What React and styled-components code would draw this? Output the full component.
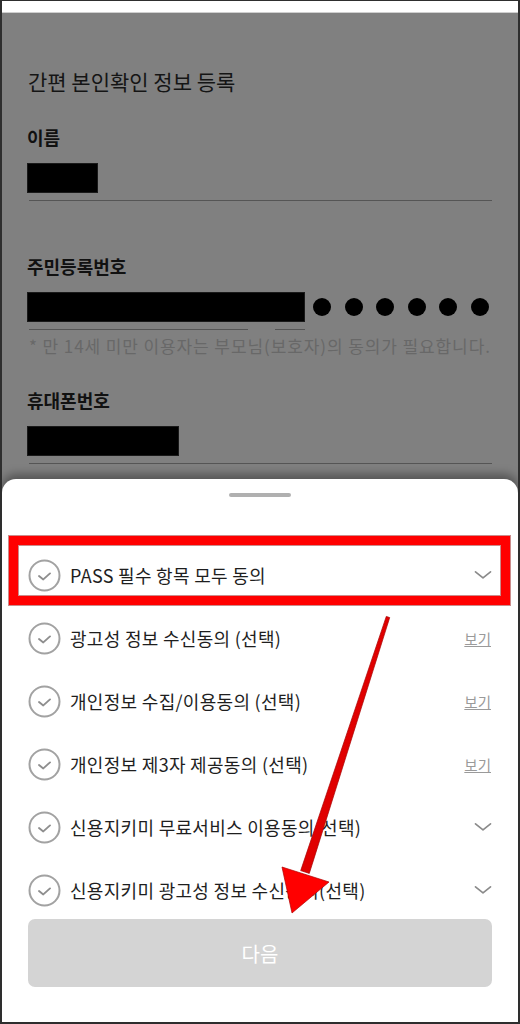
import React from "react";
import styled, { createGlobalStyle } from "styled-components";

const GlobalStyle = createGlobalStyle`
  html, body { margin: 0; padding: 0; background: #ffffff; }
  body { font-family: "Noto Sans CJK KR", "Noto Sans", sans-serif; }
  * { box-sizing: border-box; }
`;

const Frame = styled.div`
  position: relative;
  width: 520px;
  height: 1024px;
  border: 2px solid #2e2e2e;
  border-top-width: 1px;
  display: flex;
  flex-direction: column;
  overflow: hidden;
  background: #808080;
`;

const TopStrip = styled.div`
  height: 12px;
  flex: none;
  background: #ffffff;
  border-bottom: 1px solid #cfcfcf;
`;

const Form = styled.div`
  flex: 1;
  display: flex;
  flex-direction: column;
  padding: 53px 26px 0 25px;
  background: #808080;
`;

const Title = styled.h1`
  margin: 0 0 0 1px;
  font-size: 21px;
  line-height: 30px;
  font-weight: 400;
  color: #151515;
`;

const Field = styled.div`
  display: flex;
  flex-direction: column;
  margin-top: ${(p) => p.$gap}px;
`;

const Label = styled.div`
  font-size: 18px;
  line-height: 24px;
  font-weight: 700;
  color: #111;
`;

const ValueRow = styled.div`
  display: flex;
  align-items: center;
  margin-top: 14px;
  height: 30px;
`;

const Redacted = styled.div`
  width: ${(p) => p.$w}px;
  height: 30px;
  background: #000;
  border: 1px solid #1a1a1a;
`;

const Dots = styled.div`
  display: flex;
  gap: 13.5px;
  margin-left: 8px;
`;

const Dot = styled.span`
  width: 18px;
  height: 18px;
  border-radius: 50%;
  background: #000;
`;

const Underline = styled.div`
  margin: 7px 0 0 2px;
  height: 1px;
  background: #555;
`;

const SplitUnderline = styled.div`
  display: flex;
  gap: 27px;
  margin: 7px 0 0 2px;
`;

const Segment = styled.span`
  width: ${(p) => p.$w}px;
  height: 1px;
  background: #555;
`;

const Note = styled.p`
  margin: 5px 0 0 2px;
  font-size: 17px;
  line-height: 22px;
  color: #686868;
  white-space: nowrap;
  letter-spacing: 0.9px;
`;

const Sheet = styled.section`
  flex: none;
  height: 543px;
  background: #ffffff;
  border-radius: 14px 14px 0 0;
  box-shadow: 0 -5px 10px rgba(0, 0, 0, 0.35);
  display: flex;
  flex-direction: column;
  padding: 14px 25px 0 25px;
`;

const Handle = styled.div`
  align-self: center;
  width: 62px;
  height: 4px;
  border-radius: 2px;
  background: #b0b0b0;
`;

const List = styled.ul`
  list-style: none;
  margin: 51px 0 0 0;
  padding: 0;
  display: flex;
  flex-direction: column;
  gap: 9px;
`;

const Row = styled.li`
  position: relative;
  height: 54px;
  display: flex;
  align-items: center;
  gap: 9px;
  color: #1e1e1e;
  font-size: 18px;
  letter-spacing: 0.3px;

  ${(p) =>
    p.$marked &&
    `
    &::after {
      content: "";
      position: absolute;
      left: -18px;
      right: -17px;
      top: -12px;
      bottom: -3px;
      border: 9px solid #ff0000;
      box-shadow: 0 0 0 1px rgba(140, 0, 0, 0.45), inset 0 0 0 1px rgba(140, 0, 0, 0.45);
      pointer-events: none;
    }
  `}
`;

const RowText = styled.span`
  flex: 1;
  white-space: nowrap;
`;

const ViewLink = styled.a`
  font-size: 14.5px;
  letter-spacing: 0;
  color: #9a9a9a;
  text-decoration: underline;
  margin-right: 2px;
`;

const CheckIcon = () => (
  <svg width="33" height="33" viewBox="0 0 33 33" style={{ flex: "none", marginLeft: 1 }}>
    <circle cx="16.5" cy="16.5" r="15" fill="none" stroke="#a2a2a2" strokeWidth="2" />
    <path d="M11 17 L15.3 20.4 L22 14.4" fill="none" stroke="#8e8e8e" strokeWidth="1.9" strokeLinecap="round" strokeLinejoin="round" />
  </svg>
);

const Chevron = () => (
  <svg width="18" height="10" viewBox="0 0 18 10" style={{ flex: "none", marginRight: 1 }}>
    <path d="M1.5 1.8 L9 7.8 L16.5 1.8" fill="none" stroke="#8a8a8a" strokeWidth="1.7" strokeLinecap="round" strokeLinejoin="round" />
  </svg>
);

const NextButton = styled.button`
  margin-top: 2px;
  height: 68px;
  border: none;
  border-radius: 7px;
  background: #d4d4d4;
  color: #ffffff;
  font-family: inherit;
  font-size: 20px;
  margin-left: 1px;
  margin-right: 1px;
`;

const Pointer = styled.svg`
  position: absolute;
  left: -2px;
  top: -1px;
  pointer-events: none;
`;

const items = [
  { text: "PASS 필수 항목 모두 동의", action: "expand", marked: true },
  { text: "광고성 정보 수신동의 (선택)", action: "view" },
  { text: "개인정보 수집/이용동의 (선택)", action: "view" },
  { text: "개인정보 제3자 제공동의 (선택)", action: "view" },
  { text: "신용지키미 무료서비스 이용동의(선택)", action: "expand" },
  { text: "신용지키미 광고성 정보 수신동의(선택)", action: "expand" },
];

export default function App() {
  return (
    <>
      <GlobalStyle />
      <Frame>
        <TopStrip />
        <Form>
          <Title>간편 본인확인 정보 등록</Title>

          <Field $gap={29}>
            <Label>이름</Label>
            <ValueRow>
              <Redacted $w={71} />
            </ValueRow>
            <Underline />
          </Field>

          <Field $gap={53}>
            <Label>주민등록번호</Label>
            <ValueRow>
              <Redacted $w={278} />
              <Dots>
                {Array.from({ length: 6 }).map((_, i) => (
                  <Dot key={i} />
                ))}
              </Dots>
            </ValueRow>
            <SplitUnderline>
              <Segment $w={219} />
              <Segment $w={30} />
            </SplitUnderline>
            <Note>* 만 14세 미만 이용자는 부모님(보호자)의 동의가 필요합니다.</Note>
          </Field>

          <Field $gap={31}>
            <Label>휴대폰번호</Label>
            <ValueRow>
              <Redacted $w={152} />
            </ValueRow>
            <Underline />
          </Field>
        </Form>

        <Sheet>
          <Handle />
          <List>
            {items.map((it) => (
              <Row key={it.text} $marked={it.marked}>
                <CheckIcon />
                <RowText>{it.text}</RowText>
                {it.action === "view" ? <ViewLink>보기</ViewLink> : <Chevron />}
              </Row>
            ))}
          </List>
          <NextButton>다음</NextButton>
        </Sheet>

        <Pointer width="520" height="1024" viewBox="0 0 520 1024">
          <polygon points="386.3,616.4 389.7,617.6 309.3,873.4 300.7,870.6" fill="#e00000" stroke="#a80000" strokeWidth="0.7" />
          <polygon points="282,867 329,882 292,913" fill="#ff0000" stroke="#b00000" strokeWidth="0.7" />
        </Pointer>
      </Frame>
    </>
  );
}
